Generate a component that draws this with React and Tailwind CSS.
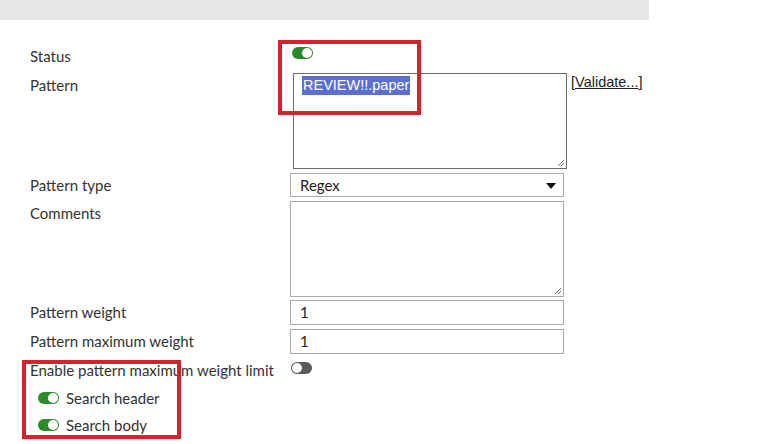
import React from 'react';

const Toggle = ({ on }) => (
  <span
    className={`relative block w-[21px] h-[12px] rounded-full ${on ? 'bg-[#2b8a2b]' : 'bg-[#5a5a5a]'}`}
  >
    <span
      className={`absolute top-[1px] w-[10px] h-[10px] rounded-full bg-white ${on ? 'right-[1px]' : 'left-[1px]'}`}
    />
  </span>
);

const Row = ({ label, className = '', labelClass = 'pt-[2px]', children }) => (
  <div className={`flex ${className}`}>
    <div className={`w-[290px] shrink-0 pl-[30px] text-[15px] text-[#333] leading-[20px] ${labelClass}`}>{label}</div>
    <div className="flex-1">{children}</div>
  </div>
);

export default function App() {
  return (
    <div className="relative w-[783px] h-[444px] bg-white overflow-hidden font-['Lato','Noto_Sans',sans-serif]">
      <div className="w-[649px] h-[20px] bg-[#e6e6e6]" />

      <div className="pt-[26px]">
        <Row label="Status" className="h-[27px]" labelClass="">
          <div className="pt-[1px] pl-[2px]"><Toggle on /></div>
        </Row>

        <Row label="Pattern">
          <div className="flex items-start">
            <div className="relative ml-[3px] w-[274px] h-[96px] border border-[#6b6b6b] bg-white">
              <span className="absolute left-[8px] top-[2px] bg-[#5b6fd1] text-white text-[14.5px] leading-[19px] px-[1px] font-['Liberation_Sans',sans-serif]">
                REVIEW!!.paper
              </span>
              <Grip />
            </div>
            <span className="ml-[4px] -mt-[1px] text-[14.5px] text-[#222] font-['Liberation_Sans',sans-serif]">
              [<span className="underline">Validate...</span>]
            </span>
          </div>
        </Row>

        <Row label="Pattern type" className="mt-[4px]">
          <div className="relative w-[274px] h-[24px] border border-[#a9a9a9] text-[15px] text-[#222] leading-[22px] pl-[9px]">
            Regex
            <span className="absolute right-[7px] top-[9px] w-0 h-0 border-l-[5px] border-r-[5px] border-t-[6px] border-l-transparent border-r-transparent border-t-[#111]" />
          </div>
        </Row>

        <Row label="Comments" className="mt-[4px]">
          <div className="relative w-[274px] h-[96px] border border-[#a9a9a9]">
            <Grip />
          </div>
        </Row>

        <Row label="Pattern weight" className="mt-[3px]">
          <div className="w-[274px] h-[25px] border border-[#a9a9a9] text-[15px] text-[#222] leading-[23px] pl-[9px]">1</div>
        </Row>

        <Row label="Pattern maximum weight" className="mt-[4px]">
          <div className="w-[274px] h-[25px] border border-[#a9a9a9] text-[15px] text-[#222] leading-[23px] pl-[9px]">1</div>
        </Row>

        <Row label="Enable pattern maximum weight limit" className="mt-[5px]" labelClass="pt-[1px]">
          <div className="pt-[3px] pl-[1px]"><Toggle /></div>
        </Row>

        <div className="pl-[38px] mt-[8px] flex flex-col gap-[7px] text-[15px] text-[#333] leading-[20px]">
          <div className="flex items-center gap-[7px]"><Toggle on /><span>Search header</span></div>
          <div className="flex items-center gap-[7px]"><Toggle on /><span>Search body</span></div>
        </div>
      </div>

      <div className="absolute left-[278px] top-[40px] w-[143px] h-[75px] border-[4px] border-[#d7222e]" />
      <div className="absolute left-[22px] top-[360px] w-[159px] h-[79px] border-[4px] border-[#d7222e]" />
    </div>
  );
}

function Grip() {
  return (
    <svg className="absolute right-[1px] bottom-[1px]" width="9" height="9" viewBox="0 0 9 9">
      <path d="M8 2 L2 8 M8 5 L5 8" stroke="#777" strokeWidth="1" />
    </svg>
  );
}
